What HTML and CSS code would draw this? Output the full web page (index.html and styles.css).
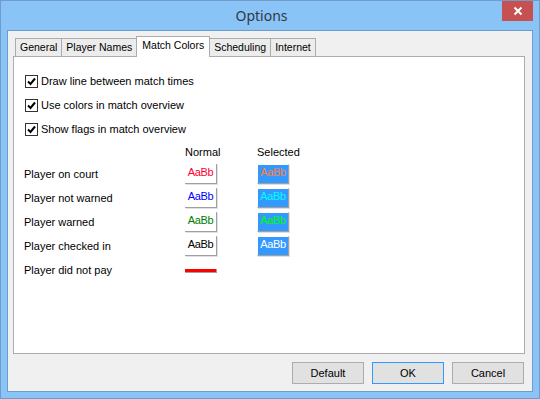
FILE: index.html
```html
<!DOCTYPE html>
<html lang="en">
<head>
    <meta charset="UTF-8">
    <title>Options</title>
    <link rel="stylesheet" href="styles.css">
</head>
<body>
    <div class="window">
        <div class="titlebar">
            <div class="title">Options</div>
            <div class="close">
                <svg width="10" height="10" viewBox="0 0 10 10">
                    <path d="M1.5 1.5 L8.5 8.5 M8.5 1.5 L1.5 8.5" stroke="#fff" stroke-width="2"/>
                </svg>
            </div>
        </div>
        <div class="client">
            <div class="tabs">
                <div class="tab">General</div>
                <div class="tab">Player Names</div>
                <div class="tab active">Match Colors</div>
                <div class="tab">Scheduling</div>
                <div class="tab">Internet</div>
            </div>
            <div class="panel">
                <div class="check">
                    <span class="box"><svg width="11" height="11" viewBox="0 0 11 11"><path d="M2 5.5 L4.5 8 L9 2.5" stroke="#000" stroke-width="2" fill="none"/></svg></span>
                    Draw line between match times
                </div>
                <div class="check">
                    <span class="box"><svg width="11" height="11" viewBox="0 0 11 11"><path d="M2 5.5 L4.5 8 L9 2.5" stroke="#000" stroke-width="2" fill="none"/></svg></span>
                    Use colors in match overview
                </div>
                <div class="check">
                    <span class="box"><svg width="11" height="11" viewBox="0 0 11 11"><path d="M2 5.5 L4.5 8 L9 2.5" stroke="#000" stroke-width="2" fill="none"/></svg></span>
                    Show flags in match overview
                </div>

                <div class="colors">
                    <div class="head"></div>
                    <div class="head">Normal</div>
                    <div class="head">Selected</div>

                    <div class="label">Player on court</div>
                    <div class="cell"><span class="swatch red">AaBb</span></div>
                    <div class="cell"><span class="swatch sel orange">AaBb</span></div>

                    <div class="label">Player not warned</div>
                    <div class="cell"><span class="swatch blue">AaBb</span></div>
                    <div class="cell"><span class="swatch sel cyan">AaBb</span></div>

                    <div class="label">Player warned</div>
                    <div class="cell"><span class="swatch green">AaBb</span></div>
                    <div class="cell"><span class="swatch sel lime">AaBb</span></div>

                    <div class="label">Player checked in</div>
                    <div class="cell"><span class="swatch black">AaBb</span></div>
                    <div class="cell"><span class="swatch sel white">AaBb</span></div>

                    <div class="label">Player did not pay</div>
                    <div class="cell"><span class="line"></span></div>
                    <div class="cell"></div>
                </div>
            </div>
            <div class="buttons">
                <div class="btn">Default</div>
                <div class="btn focus">OK</div>
                <div class="btn">Cancel</div>
            </div>
        </div>
    </div>
</body>
</html>
```

FILE: styles.css
```css
*{
    margin: 0px;
    padding: 0px;
    box-sizing: border-box;
}
body{
    font-family: "Liberation Sans", Arial, sans-serif;
    font-size: 11px;
    color: #000;
}
.window{
    display: flex;
    flex-direction: column;
    width: 540px;
    height: 399px;
    background-color: #8ac3f6;
    border: 1px solid #6f9ccb;
}
.titlebar{
    display: flex;
    height: 29px;
}
.title{
    flex: 1;
    padding-left: 20px;
    padding-top: 5px;
    text-align: center;
    font-family: "Noto Sans", "Open Sans", sans-serif;
    font-size: 14px;
    color: #2e3a46;
}
.close{
    display: flex;
    align-items: center;
    justify-content: center;
    width: 31px;
    height: 20px;
    margin-right: 6px;
    background-color: #c75050;
}
.client{
    flex: 1;
    display: flex;
    flex-direction: column;
    margin: 0 6px 6px 6px;
    padding: 5px 7px 7px 5px;
    background-color: #f0f0f0;
    border: 1px solid #6f9ccb;
}
.tabs{
    display: flex;
    align-items: flex-end;
    height: 20px;
    padding-left: 2px;
}
.tab{
    height: 18px;
    padding: 2px 4px 0 4px;
    background-color: #ececec;
    border: 1px solid #acacac;
    border-bottom: none;
    border-left: none;
    font-size: 10.5px;
    white-space: nowrap;
}
.tab:first-child{
    border-left: 1px solid #acacac;
}
.tab.active{
    position: relative;
    z-index: 1;
    height: 21px;
    margin-bottom: -1px;
    margin-left: -1px;
    padding: 2px 5px 0 5px;
    background-color: #fff;
    border-left: 1px solid #acacac;
}
.panel{
    flex: 1;
    padding: 12px 10px 0 10px;
    background-color: #fff;
    border: 1px solid #acacac;
}
.check{
    display: flex;
    align-items: center;
    height: 24px;
    padding-left: 1px;
    gap: 3px;
}
.box{
    display: flex;
    align-items: center;
    justify-content: center;
    width: 13px;
    height: 13px;
    border: 1px solid #333;
    background-color: #fff;
}
.colors{
    display: grid;
    grid-template-columns: 161px 72px 40px;
    grid-template-rows: 21px repeat(5, 24px);
    align-items: center;
}
.head{
    padding-top: 1px;
}
.cell{
    display: flex;
    align-items: center;
}
.swatch{
    display: block;
    width: 32px;
    height: 20px;
    padding-top: 2px;
    text-align: center;
    letter-spacing: -0.4px;
    background-color: #fff;
    border-right: 1px solid #a0a0a0;
    border-bottom: 1px solid #a0a0a0;
    box-shadow: 1px 1px 0 #e0e0e0;
}
.swatch.sel{
    background-color: #3399ff;
    border-top: 1px solid #fff;
    border-left: 1px solid #fff;
    padding-top: 1px;
}
.red{ color: #ff0033; }
.orange{ color: #ff8040; }
.blue{ color: #0000ff; }
.cyan{ color: #00ffff; }
.green{ color: #008000; }
.lime{ color: #00ff00; }
.black{ color: #000; }
.white{ color: #fff; }
.line{
    display: block;
    width: 32px;
    height: 4px;
    margin-top: 1px;
    background-color: #f00;
    border-right: 1px solid #a0a0a0;
    border-bottom: 1px solid #a0a0a0;
}
.buttons{
    display: flex;
    justify-content: flex-end;
    gap: 8px;
    margin-top: 8px;
    margin-right: 1px;
}
.btn{
    width: 72px;
    height: 22px;
    line-height: 20px;
    text-align: center;
    background-color: #e1e1e1;
    border: 1px solid #adadad;
}
.btn.focus{
    border-color: #3399ff;
}
```
